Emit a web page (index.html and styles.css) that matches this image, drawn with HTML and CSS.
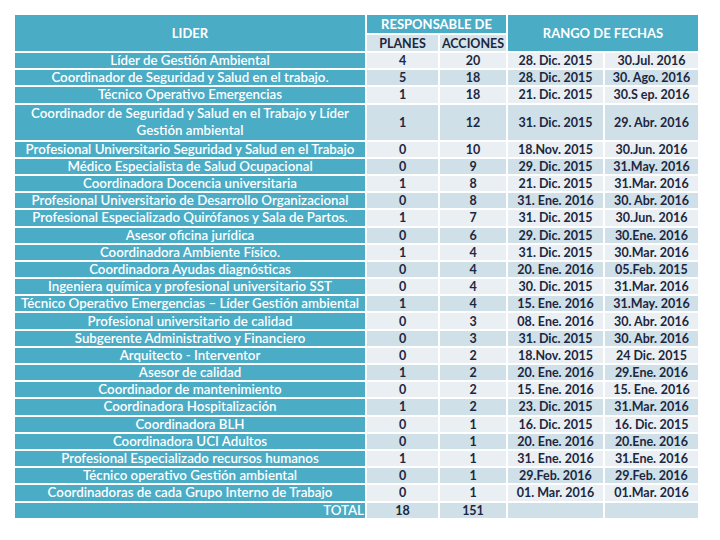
FILE: index.html
```html
<!DOCTYPE html>
<html lang="es">
<head>
<meta charset="utf-8">
<title>Responsables</title>
<link rel="stylesheet" href="styles.css">
</head>
<body>
<table class="plan">
  <colgroup>
    <col class="c-lider"><col class="c-planes"><col class="c-acciones"><col class="c-ini"><col class="c-fin">
  </colgroup>
  <thead>
    <tr class="h1">
      <th rowspan="2" class="hd">LIDER</th>
      <th colspan="2" class="hd">RESPONSABLE DE</th>
      <th colspan="2" rowspan="2" class="hd">RANGO DE FECHAS</th>
    </tr>
    <tr class="h2">
      <th class="sub">PLANES</th>
      <th class="sub">ACCIONES</th>
    </tr>
  </thead>
  <tbody>
    <tr><td class="lid">Líder de Gestión Ambiental</td><td>4</td><td>20</td><td>28. Dic. 2015</td><td>30.Jul. 2016</td></tr>
    <tr><td class="lid">Coordinador de Seguridad y Salud en el trabajo.</td><td>5</td><td>18</td><td>28. Dic. 2015</td><td>30. Ago. 2016</td></tr>
    <tr><td class="lid">Técnico Operativo Emergencias</td><td>1</td><td>18</td><td>21. Dic. 2015</td><td>30.S ep. 2016</td></tr>
    <tr class="tall"><td class="lid">Coordinador de Seguridad y Salud en el Trabajo y Líder<br>Gestión ambiental</td><td>1</td><td>12</td><td>31. Dic. 2015</td><td>29. Abr. 2016</td></tr>
    <tr><td class="lid">Profesional Universitario Seguridad y Salud en el Trabajo</td><td>0</td><td>10</td><td>18.Nov. 2015</td><td>30.Jun. 2016</td></tr>
    <tr><td class="lid">Médico Especialista de Salud Ocupacional</td><td>0</td><td>9</td><td>29. Dic. 2015</td><td>31.May. 2016</td></tr>
    <tr><td class="lid">Coordinadora Docencia universitaria</td><td>1</td><td>8</td><td>21. Dic. 2015</td><td>31.Mar. 2016</td></tr>
    <tr><td class="lid">Profesional Universitario de Desarrollo Organizacional</td><td>0</td><td>8</td><td>31. Ene. 2016</td><td>30. Abr. 2016</td></tr>
    <tr><td class="lid">Profesional Especializado Quirófanos y Sala de Partos.</td><td>1</td><td>7</td><td>31. Dic. 2015</td><td>30.Jun. 2016</td></tr>
    <tr><td class="lid">Asesor oficina jurídica</td><td>0</td><td>6</td><td>29. Dic. 2015</td><td>30.Ene. 2016</td></tr>
    <tr><td class="lid">Coordinadora Ambiente Físico.</td><td>1</td><td>4</td><td>31. Dic. 2015</td><td>30.Mar. 2016</td></tr>
    <tr><td class="lid">Coordinadora Ayudas diagnósticas</td><td>0</td><td>4</td><td>20. Ene. 2016</td><td>05.Feb. 2015</td></tr>
    <tr><td class="lid">Ingeniera química y profesional universitario SST</td><td>0</td><td>4</td><td>30. Dic. 2015</td><td>31.Mar. 2016</td></tr>
    <tr><td class="lid">Técnico Operativo Emergencias – Líder Gestión ambiental</td><td>1</td><td>4</td><td>15. Ene. 2016</td><td>31.May. 2016</td></tr>
    <tr><td class="lid">Profesional universitario de calidad</td><td>0</td><td>3</td><td>08. Ene. 2016</td><td>30. Abr. 2016</td></tr>
    <tr><td class="lid">Subgerente Administrativo y Financiero</td><td>0</td><td>3</td><td>31. Dic. 2015</td><td>30. Abr. 2016</td></tr>
    <tr><td class="lid">Arquitecto - Interventor</td><td>0</td><td>2</td><td>18.Nov. 2015</td><td>24 Dic. 2015</td></tr>
    <tr><td class="lid">Asesor de calidad</td><td>1</td><td>2</td><td>20. Ene. 2016</td><td>29.Ene. 2016</td></tr>
    <tr><td class="lid">Coordinador de mantenimiento</td><td>0</td><td>2</td><td>15. Ene. 2016</td><td>15. Ene. 2016</td></tr>
    <tr><td class="lid">Coordinadora Hospitalización</td><td>1</td><td>2</td><td>23. Dic. 2015</td><td>31.Mar. 2016</td></tr>
    <tr><td class="lid">Coordinadora BLH</td><td>0</td><td>1</td><td>16. Dic. 2015</td><td>16. Dic. 2015</td></tr>
    <tr><td class="lid">Coordinadora UCI Adultos</td><td>0</td><td>1</td><td>20. Ene. 2016</td><td>20.Ene. 2016</td></tr>
    <tr><td class="lid">Profesional Especializado recursos humanos</td><td>1</td><td>1</td><td>31. Ene. 2016</td><td>31.Ene. 2016</td></tr>
    <tr><td class="lid">Técnico operativo Gestión ambiental</td><td>0</td><td>1</td><td>29.Feb. 2016</td><td>29.Feb. 2016</td></tr>
    <tr><td class="lid">Coordinadoras de cada Grupo Interno de Trabajo</td><td>0</td><td>1</td><td>01. Mar. 2016</td><td>01.Mar. 2016</td></tr>
    <tr class="total"><td class="lid tot">TOTAL</td><td>18</td><td>151</td><td></td><td></td></tr>
  </tbody>
</table>
</body>
</html>
```
FILE: styles.css
```css
html, body {
  margin: 0;
  padding: 0;
  background: #ffffff;
}

body {
  padding: 13px 0 0 13px;
  font-family: Lato, "Open Sans", sans-serif;
}

.plan {
  border-collapse: separate;
  border-spacing: 2px;
  table-layout: fixed;
  width: 687px;
}

.c-lider { width: 350px; }
.c-planes { width: 71px; }
.c-acciones { width: 66px; }
.c-ini { width: 95px; }
.c-fin { width: 93px; }

.plan th,
.plan td {
  padding: 0;
  text-align: center;
  vertical-align: middle;
  white-space: nowrap;
  overflow: hidden;
}

.h1 th { height: 18px; }
.h2 th { height: 16px; }

.hd {
  background: #4bacc6;
  color: #ffffff;
  font-size: 13px;
  font-weight: 700;
}

.sub {
  background: #d5e3ea;
  color: #1c2740;
  font-size: 12.5px;
  font-weight: 700;
}

.plan tbody td {
  height: 15.2px;
  line-height: 15px;
  font-size: 12.5px;
  font-weight: 700;
  color: #1c2740;
  background: #e9eff3;
}

.plan tbody tr:nth-child(even) td {
  background: #cfe0e8;
}

.plan tbody tr td.lid {
  background: #4bacc6;
  color: #ffffff;
  font-weight: 600;
  font-size: 13.3px;
}

.plan tbody tr.tall td {
  height: 35px;
  line-height: 17px;
}

.plan tbody td.tot {
  text-align: right;
  padding-right: 1px;
}
```
